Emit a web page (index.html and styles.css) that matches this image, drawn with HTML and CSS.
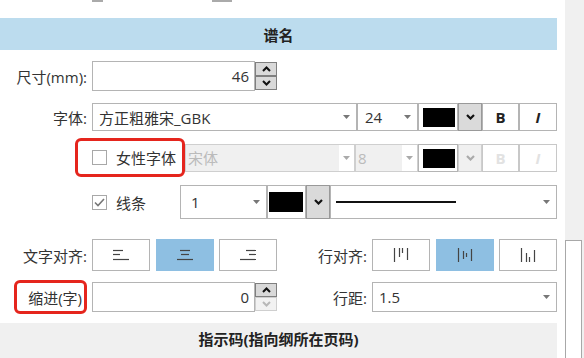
FILE: index.html
```html
<!DOCTYPE html>
<html lang="zh-CN">
<head>
  <meta charset="UTF-8" />
  <title>谱名设置</title>
  <link rel="stylesheet" href="styles.css">
</head>
<body>
  <div class="page">
    <div class="panel">
      <div class="top-strip"><span class="stub stub-a"></span><span class="stub stub-b"></span></div>
      <div class="section-head">谱名</div>

      <!-- 尺寸 -->
      <div class="row row-size">
        <span class="lbl">尺寸(mm):</span>
        <div class="box num">46</div>
        <div class="spin">
          <span class="spin-btn"><svg width="9" height="6"><polyline points="1,5 4.5,1.5 8,5" /></svg></span>
          <span class="spin-btn"><svg width="9" height="6"><polyline points="1,1 4.5,4.5 8,1" /></svg></span>
        </div>
      </div>

      <!-- 字体 -->
      <div class="row row-font">
        <span class="lbl">字体:</span>
        <div class="box select font-sel"><span class="val">方正粗雅宋_GBK</span><svg class="arrow" width="7" height="4"><polygon points="0,0 7,0 3.5,4" /></svg></div>
        <div class="box select size-sel"><span class="val">24</span><svg class="arrow" width="7" height="4"><polygon points="0,0 7,0 3.5,4" /></svg></div>
        <div class="box color"><span class="swatch"></span></div>
        <div class="box color-dd"><svg width="9" height="6"><polyline points="1,1 4.5,4.5 8,1" /></svg></div>
        <div class="box style-btn bold-btn">B</div>
        <div class="box style-btn italic-btn">I</div>
      </div>

      <!-- 女性字体 -->
      <div class="row row-female">
        <div class="mark mark-female">
          <span class="check"></span>
          <span class="check-text">女性字体</span>
        </div>
        <div class="box select off font-off"><span class="val">宋体</span><span class="arrow-cell"><svg class="arrow" width="7" height="4"><polygon points="0,0 7,0 3.5,4" /></svg></span></div>
        <div class="box select off size-off"><span class="val">8</span><span class="arrow-cell"><svg class="arrow" width="7" height="4"><polygon points="0,0 7,0 3.5,4" /></svg></span></div>
        <div class="box color"><span class="swatch"></span></div>
        <div class="box color-dd off"><svg width="9" height="6"><polyline points="1,1 4.5,4.5 8,1" /></svg></div>
        <div class="box style-btn bold-btn off">B</div>
        <div class="box style-btn italic-btn off">I</div>
      </div>

      <!-- 线条 -->
      <div class="row row-line">
        <div class="check-group">
          <span class="check checked"><svg width="11" height="9"><polyline points="1,4.5 4,7.5 10,1" /></svg></span>
          <span class="check-text">线条</span>
        </div>
        <div class="box select width-sel"><span class="val">1</span><svg class="arrow" width="7" height="4"><polygon points="0,0 7,0 3.5,4" /></svg></div>
        <div class="box color line-color"><span class="swatch"></span></div>
        <div class="box color-dd"><svg width="9" height="6"><polyline points="1,1 4.5,4.5 8,1" /></svg></div>
        <div class="box select style-sel"><span class="line-sample"></span><svg class="arrow" width="7" height="4"><polygon points="0,0 7,0 3.5,4" /></svg></div>
      </div>

      <!-- 对齐 -->
      <div class="row row-align">
        <span class="lbl">文字对齐:</span>
        <div class="btn-group">
          <div class="align-btn"><svg width="16" height="12"><line x1="0" y1="1.5" x2="10" y2="1.5" /><line x1="0" y1="5.5" x2="7" y2="5.5" /><line x1="0" y1="10.5" x2="16" y2="10.5" /></svg></div>
          <div class="align-btn on"><svg width="16" height="12"><line x1="3" y1="1.5" x2="13" y2="1.5" /><line x1="4" y1="5.5" x2="12" y2="5.5" /><line x1="0" y1="10.5" x2="16" y2="10.5" /></svg></div>
          <div class="align-btn"><svg width="16" height="12"><line x1="6" y1="1.5" x2="16" y2="1.5" /><line x1="9" y1="5.5" x2="16" y2="5.5" /><line x1="0" y1="10.5" x2="16" y2="10.5" /></svg></div>
        </div>
        <span class="lbl lbl-right">行对齐:</span>
        <div class="btn-group">
          <div class="align-btn"><svg width="16" height="14"><line x1="1.5" y1="0" x2="1.5" y2="14" /><line x1="6.5" y1="0" x2="6.5" y2="9" /><line x1="9.5" y1="0" x2="9.5" y2="5" /><line x1="14.5" y1="0" x2="14.5" y2="12" /></svg></div>
          <div class="align-btn on"><svg width="16" height="14"><line x1="1.5" y1="0" x2="1.5" y2="14" /><line x1="6.5" y1="3" x2="6.5" y2="11" /><line x1="9.5" y1="5" x2="9.5" y2="9" /><line x1="14.5" y1="1" x2="14.5" y2="13" /></svg></div>
          <div class="align-btn"><svg width="16" height="14"><line x1="1.5" y1="0" x2="1.5" y2="14" /><line x1="6.5" y1="5" x2="6.5" y2="14" /><line x1="9.5" y1="9" x2="9.5" y2="14" /><line x1="14.5" y1="2" x2="14.5" y2="14" /></svg></div>
        </div>
      </div>

      <!-- 缩进 / 行距 -->
      <div class="row row-indent">
        <div class="mark mark-indent">缩进(字)</div>
        <div class="box num">0</div>
        <div class="spin">
          <span class="spin-btn"><svg width="9" height="6"><polyline points="1,5 4.5,1.5 8,5" /></svg></span>
          <span class="spin-btn off"><svg width="9" height="6"><polyline points="1,1 4.5,4.5 8,1" /></svg></span>
        </div>
        <span class="lbl lbl-right">行距:</span>
        <div class="box select spacing-sel"><span class="val">1.5</span><svg class="arrow" width="7" height="4"><polygon points="0,0 7,0 3.5,4" /></svg></div>
      </div>

      <div class="section-foot">指示码(指向纲所在页码)</div>
    </div>
    <div class="scrollbar"><div class="thumb"></div></div>
  </div>
</body>
</html>
```

FILE: styles.css
```css
* {
  box-sizing: border-box;
}
body {
  margin: 0;
  font-family: "Open Sans", "Noto Sans CJK SC", sans-serif;
  font-size: 15px;
  color: #333;
  background: #fff;
  overflow: hidden;
}
.page {
  display: flex;
  height: 358px;
  overflow: hidden;
}
.panel {
  width: 557px;
  flex-shrink: 0;
}
.scrollbar {
  width: 19px;
  margin-left: 8px;
  background: #f0f0f0;
}
.thumb {
  margin-top: 240px;
  width: 17px;
  height: 118px;
  border: 1px solid #a8a8a8;
  border-bottom: none;
  background: #fff;
}
.top-strip {
  height: 18px;
  display: flex;
  padding-left: 92px;
  gap: 109px;
}
.stub {
  height: 2px;
  background: #aaa;
}
.stub-a {
  width: 11px;
}
.stub-b {
  width: 20px;
}
.section-head {
  height: 32px;
  background: #bcdcee;
  font-weight: 700;
  display: flex;
  align-items: center;
  justify-content: center;
  color: #222;
}
.section-foot {
  margin-top: 9px;
  height: 35px;
  background: #f0f0f0;
  font-weight: 700;
  display: flex;
  justify-content: center;
  padding-top: 5px;
  color: #222;
}
.row {
  display: flex;
  align-items: center;
}
.lbl {
  width: 87px;
  margin-right: 5px;
  text-align: right;
  white-space: nowrap;
}
.lbl-right {
  width: 90px;
}
.box {
  border: 1px solid #b4b4b4;
  background: #fff;
  height: 100%;
  display: flex;
  align-items: center;
  white-space: nowrap;
}
.num {
  width: 163px;
  justify-content: flex-end;
  padding-right: 5px;
}
.spin {
  width: 22px;
  height: 100%;
  display: flex;
  flex-direction: column;
  padding: 1px 0;
}
.spin-btn {
  flex: 1;
  border: 1px solid #7f7f7f;
  background: #d9d9d9;
  display: flex;
  align-items: center;
  justify-content: center;
}
.spin-btn polyline {
  fill: none;
  stroke: #111;
  stroke-width: 2;
}
.spin-btn.off {
  border-color: #cfcfcf;
  background: #f2f2f2;
}
.spin-btn.off polyline {
  stroke: #b8b8b8;
}
.select {
  justify-content: space-between;
  padding: 0 6px 0 6px;
}
.arrow polygon {
  fill: #777;
}
.row-size {
  margin-top: 11px;
  height: 30px;
}
.row-font {
  margin-top: 12px;
  height: 28px;
}
.font-sel {
  width: 265px;
}
.size-sel {
  width: 61px;
  padding-left: 7px;
}
.color {
  width: 40px;
  padding: 4px 2px 3px 4px;
}
.swatch {
  display: block;
  width: 100%;
  height: 100%;
  background: #000;
}
.color-dd {
  width: 24px;
  background: #dadada;
  border-color: #999;
  justify-content: center;
}
.color-dd polyline {
  fill: none;
  stroke: #111;
  stroke-width: 2.2;
}
.color-dd.off {
  background: #f0f0f0;
  border-color: #cfcfcf;
}
.color-dd.off polyline {
  stroke: #aaa;
}
.style-btn {
  width: 37px;
  justify-content: center;
  font-weight: 700;
  font-size: 15px;
  color: #222;
}
.italic-btn {
  width: 38px;
  font-style: italic;
}
.style-btn.off {
  color: #e2e2e2;
  border-color: #c8c8c8;
}
.row-female {
  margin-top: 7px;
  height: 39px;
}
.mark {
  border: 3px solid #e5251d;
  border-radius: 6px;
  display: flex;
  align-items: center;
}
.mark-female {
  margin-left: 75px;
  width: 110px;
  height: 39px;
  padding-left: 14px;
}
.check {
  width: 15px;
  height: 15px;
  border: 1px solid #a8a8a8;
  background: #fff;
  display: flex;
  align-items: center;
  justify-content: center;
  flex-shrink: 0;
}
.check polyline {
  fill: none;
  stroke: #777;
  stroke-width: 1.6;
}
.check-text {
  margin-left: 9px;
  white-space: nowrap;
}
.row-female .box {
  height: 28px;
}
.select.off {
  padding: 0;
  color: #bbb;
  border-color: #cfcfcf;
}
.select.off .val {
  flex: 1;
  height: 100%;
  background: #f0f0f0;
  display: flex;
  align-items: center;
  padding-left: 2px;
}
.arrow-cell {
  width: 15px;
  height: 100%;
  display: flex;
  align-items: center;
  justify-content: center;
}
.select.off .arrow polygon {
  fill: #aaa;
}
.font-off {
  width: 170px;
}
.size-off {
  width: 63px;
}
.size-off .val {
  padding-left: 7px;
}
.row-line {
  margin-top: 8px;
  height: 34px;
  padding-left: 92px;
}
.check-group {
  width: 88px;
  display: flex;
  align-items: center;
}
.width-sel {
  width: 87px;
  padding-left: 10px;
}
.line-color {
  width: 39px;
  padding: 6px 2px 6px 1px;
}
.style-sel {
  width: 227px;
  padding-left: 5px;
}
.line-sample {
  width: 120px;
  height: 2px;
  background: #111;
}
.row-align {
  margin-top: 20px;
  height: 32px;
}
.btn-group {
  display: flex;
  gap: 5.5px;
  height: 100%;
}
.align-btn {
  width: 58px;
  height: 100%;
  border: 1px solid #b4b4b4;
  background: #fff;
  display: flex;
  align-items: center;
  justify-content: center;
}
.align-btn.on {
  background: #8ebfe2;
  border-color: #8ebfe2;
}
.align-btn line {
  stroke: #444;
  stroke-width: 1.2;
}
.row-indent {
  margin-top: 9px;
  height: 34px;
}
.row-indent .box,
.row-indent .spin {
  height: 30px;
}
.mark-indent {
  margin-left: 14px;
  margin-right: 5px;
  width: 73px;
  height: 34px;
  justify-content: flex-end;
  padding-right: 2px;
  white-space: nowrap;
}
.spacing-sel {
  width: 185px;
}
```
